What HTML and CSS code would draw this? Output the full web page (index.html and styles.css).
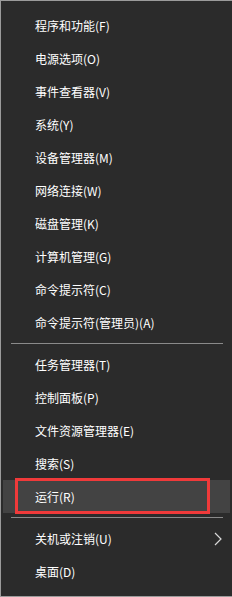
FILE: index.html
```html
<!DOCTYPE html>
<html lang="zh-CN">
<head>
    <meta charset="utf-8">
    <title>Win+X</title>
    <link rel="stylesheet" href="styles.css">
</head>
<body>
<div class="menu">
    <div class="item">程序和功能(F)</div>
    <div class="item">电源选项(O)</div>
    <div class="item">事件查看器(V)</div>
    <div class="item">系统(Y)</div>
    <div class="item">设备管理器(M)</div>
    <div class="item">网络连接(W)</div>
    <div class="item">磁盘管理(K)</div>
    <div class="item">计算机管理(G)</div>
    <div class="item">命令提示符(C)</div>
    <div class="item">命令提示符(管理员)(A)</div>
    <div class="sep"></div>
    <div class="item">任务管理器(T)</div>
    <div class="item">控制面板(P)</div>
    <div class="item">文件资源管理器(E)</div>
    <div class="item">搜索(S)</div>
    <div class="item active">运行(R)<span class="mark"></span></div>
    <div class="sep"></div>
    <div class="item has-sub">关机或注销(U)
        <svg class="chevron" width="8" height="14" viewBox="0 0 8 14">
            <polyline points="1,1 7,7 1,13" fill="none" stroke="#d8d8d8" stroke-width="1.2"/>
        </svg>
    </div>
    <div class="item">桌面(D)</div>
</div>
</body>
</html>
```

FILE: styles.css
```css
html, body {
    margin: 0;
    padding: 0;
    background: #2b2b2b;
}

* {
    box-sizing: border-box;
}

.menu {
    width: 232px;
    height: 597px;
    padding: 8px 0;
    background: #2b2b2b;
    border-top: 1px solid #9b9b9b;
    border-left: 1px solid #9b9b9b;
    border-bottom: 1px solid #9b9b9b;
    font-family: "Noto Sans CJK SC", "Microsoft YaHei", sans-serif;
    font-size: 12px;
    color: #ffffff;
}

.item {
    position: relative;
    display: flex;
    align-items: center;
    height: 33px;
    margin: 0 2px;
    padding-left: 32px;
    white-space: nowrap;
}

.item.active {
    background: #434343;
}

/* red annotation frame */
.item .mark {
    position: absolute;
    left: 12px;
    top: -2px;
    width: 195px;
    height: 36px;
    border: 3px solid #f03a3a;
}

.item .chevron {
    position: absolute;
    right: 8px;
    top: 10px;
}

.sep {
    height: 9px;
    padding: 4px 9px 0 10px;
}

.sep::before {
    content: "";
    display: block;
    height: 1px;
    background: #8a8a8a;
}
```
